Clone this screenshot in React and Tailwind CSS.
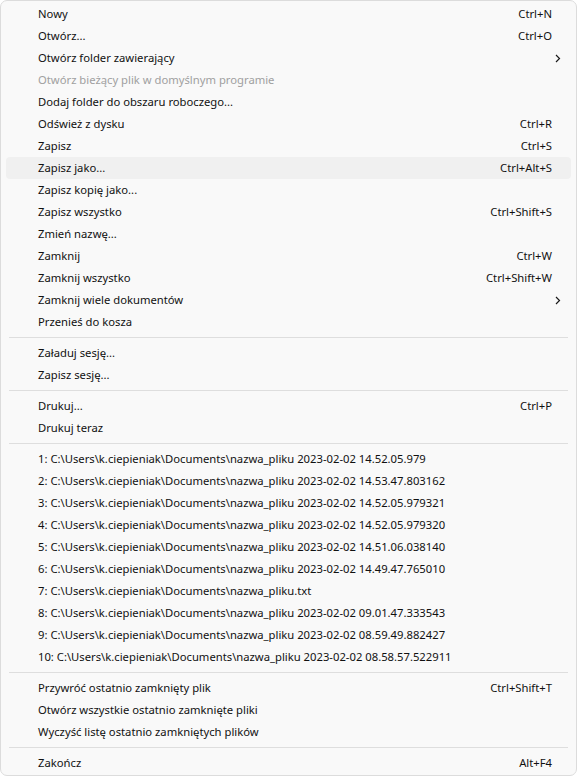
import React from "react";

const items = [
  { t: "Nowy", s: "Ctrl+N" },
  { t: "Otwórz...", s: "Ctrl+O" },
  { t: "Otwórz folder zawierający", sub: true },
  { t: "Otwórz bieżący plik w domyślnym programie", dis: true },
  { t: "Dodaj folder do obszaru roboczego..." },
  { t: "Odśwież z dysku", s: "Ctrl+R" },
  { t: "Zapisz", s: "Ctrl+S" },
  { t: "Zapisz jako...", s: "Ctrl+Alt+S", hover: true },
  { t: "Zapisz kopię jako..." },
  { t: "Zapisz wszystko", s: "Ctrl+Shift+S" },
  { t: "Zmień nazwę..." },
  { t: "Zamknij", s: "Ctrl+W" },
  { t: "Zamknij wszystko", s: "Ctrl+Shift+W" },
  { t: "Zamknij wiele dokumentów", sub: true },
  { t: "Przenieś do kosza" },
  { sep: true },
  { t: "Załaduj sesję..." },
  { t: "Zapisz sesję..." },
  { sep: true },
  { t: "Drukuj...", s: "Ctrl+P" },
  { t: "Drukuj teraz" },
  { sep: true },
  { t: "1: C:\\Users\\k.ciepieniak\\Documents\\nazwa_pliku 2023-02-02 14.52.05.979" },
  { t: "2: C:\\Users\\k.ciepieniak\\Documents\\nazwa_pliku 2023-02-02 14.53.47.803162" },
  { t: "3: C:\\Users\\k.ciepieniak\\Documents\\nazwa_pliku 2023-02-02 14.52.05.979321" },
  { t: "4: C:\\Users\\k.ciepieniak\\Documents\\nazwa_pliku 2023-02-02 14.52.05.979320" },
  { t: "5: C:\\Users\\k.ciepieniak\\Documents\\nazwa_pliku 2023-02-02 14.51.06.038140" },
  { t: "6: C:\\Users\\k.ciepieniak\\Documents\\nazwa_pliku 2023-02-02 14.49.47.765010" },
  { t: "7: C:\\Users\\k.ciepieniak\\Documents\\nazwa_pliku.txt" },
  { t: "8: C:\\Users\\k.ciepieniak\\Documents\\nazwa_pliku 2023-02-02 09.01.47.333543" },
  { t: "9: C:\\Users\\k.ciepieniak\\Documents\\nazwa_pliku 2023-02-02 08.59.49.882427" },
  { t: "10: C:\\Users\\k.ciepieniak\\Documents\\nazwa_pliku 2023-02-02 08.58.57.522911" },
  { sep: true },
  { t: "Przywróć ostatnio zamknięty plik", s: "Ctrl+Shift+T" },
  { t: "Otwórz wszystkie ostatnio zamknięte pliki" },
  { t: "Wyczyść listę ostatnio zamkniętych plików" },
  { sep: true },
  { t: "Zakończ", s: "Alt+F4" },
];

function Chevron() {
  return (
    <svg width="6" height="9" viewBox="0 0 6 9" className="absolute right-[10px] top-[7px]">
      <path d="M1 1 L4.5 4.5 L1 8" fill="none" stroke="#1a1a1a" strokeWidth="1.2" />
    </svg>
  );
}

export default function App() {
  return (
    <div className="w-[577px] h-[777px] bg-white">
      <div
        className="w-[577px] h-[776px] bg-[#f9f9f9] border border-[#dcdcdc] rounded-[7px] pt-[2px] flex flex-col text-[11.25px] text-[#111111]"
        style={{ fontFamily: '"Segoe UI", "Noto Sans", sans-serif' }}
      >
        {items.map((it, i) =>
          it.sep ? (
            <div key={i} className="h-[9px] flex items-center px-[8px]">
              <div className="h-px w-full bg-[#dedede]" />
            </div>
          ) : (
            <div
              key={i}
              className={
                "relative mx-[5px] h-[22px] flex items-center justify-between pl-[32px] pr-[19px] rounded-[4px] " +
                (it.hover ? "bg-[#f0f0f0] " : "") +
                (it.dis ? "text-[#a0a0a0]" : "")
              }
            >
              <span className="whitespace-pre">{it.t}</span>
              {it.s && <span>{it.s}</span>}
              {it.sub && <Chevron />}
            </div>
          )
        )}
      </div>
    </div>
  );
}
